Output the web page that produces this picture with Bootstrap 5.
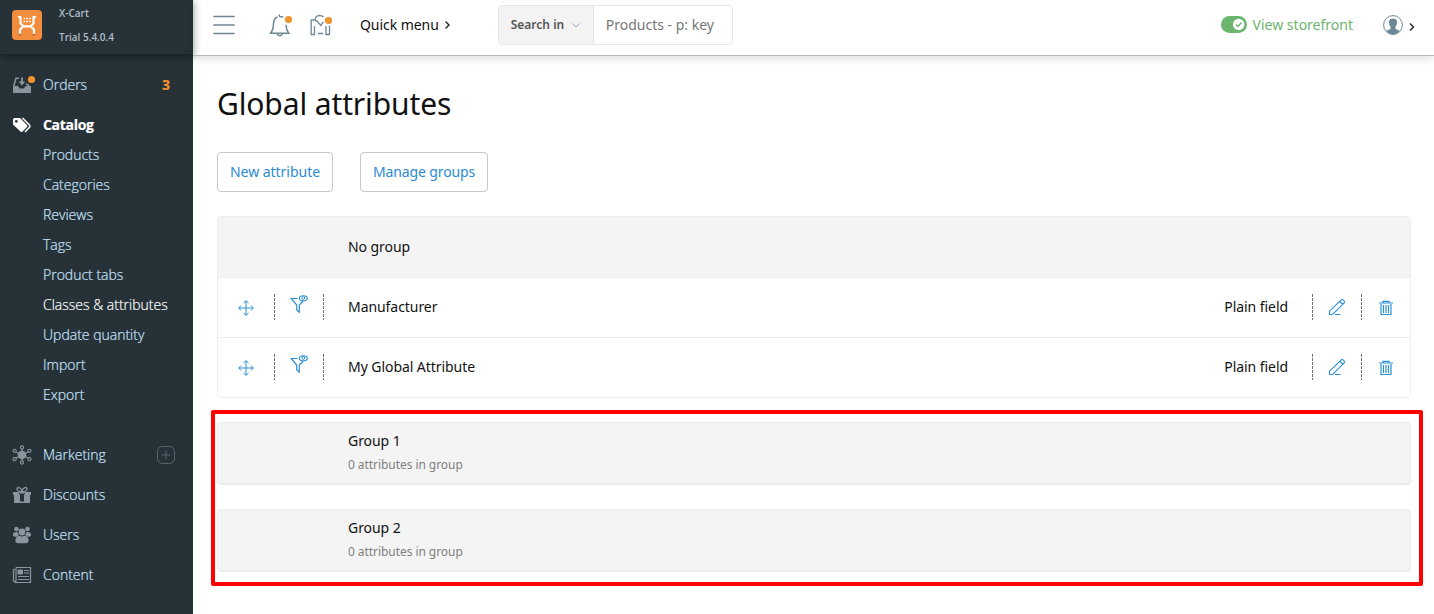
<!DOCTYPE html>
<html lang="en">
<head>
<meta charset="utf-8">
<title>Global attributes</title>
<meta name="viewport" content="width=device-width, initial-scale=1">
<link href="https://cdn.jsdelivr.net/npm/bootstrap@5.3.0/dist/css/bootstrap.min.css" rel="stylesheet">
<style>
body{font-family:"Noto Sans","Open Sans",sans-serif;font-size:14px;line-height:20px;letter-spacing:-.06px;color:#111;background:#fff;height:614px;overflow:hidden}
svg{display:block;flex:none}
a{text-decoration:none}
.side{width:193px;height:614px;background:#263238;font-family:"Open Sans",sans-serif;font-weight:300;letter-spacing:0}
.brand-bar{height:55px;padding-left:12px;box-shadow:0 1px 8px rgba(0,0,0,.45);border-bottom:1px solid #1c2226}
.brand-text{font-size:10px;font-weight:600;line-height:24px;color:#b4bfc9;margin:1px 0 0 17px}
.brand-logo{margin-top:10px}
.side-nav{padding-top:10px}
.side-link{height:40px;padding:0 23px 0 12px;color:#c9e3fb;display:flex;align-items:center}
.side-link,.sub-link{-webkit-text-stroke:.2px currentColor}
.side-link svg{width:20px;height:20px;margin-right:11px;color:#8c959d;overflow:visible}
.side-link.now{height:30px;margin-top:5px;color:#fff;font-weight:700;letter-spacing:-.3px}
.side-link.now svg{color:#fff}
.side-link.lower{margin-top:25px}
.side-link .plus{margin:0 -6px 0 auto;color:#58656c}
.sub-link{display:block;height:30px;line-height:30px;padding-left:43px;color:#c9e3fb}
.sub-link.now{color:#fff}
.count{margin-left:auto;color:#f0932f;font-weight:700}
.top{height:56px;border-bottom:1px solid #b9b9b9;box-shadow:0 2px 9px rgba(0,0,0,.14);padding:0 18px 6px 20px}
.bell{margin-left:34px}
.news{margin-left:17px}
.quick{margin-left:26px}
.search{height:40px;width:235px;border:1px solid #e6e6e6;border-radius:4px;overflow:hidden;margin-left:47px;letter-spacing:0}
.search-in{width:95px;background:#f3f3f3;border-right:1px solid #e6e6e6;color:#555;font-size:12px;font-weight:600;padding-left:12px}
.search-key{color:#777;padding-left:12px}
.green{color:#6bb56e;letter-spacing:0}
.storefront{margin-left:6px}
.user{margin-left:30px;margin-right:5px}
.page{padding:33px 11px 0 18px}
h1.title{font-size:30px;font-weight:400;line-height:30px;letter-spacing:-.12px;margin:0 0 33px 6px}
.actions{gap:27px;margin-left:6px}
.act{height:40px;border:1px solid #c8c8c8;border-radius:4px;color:#2b8bd2;font-size:14px;line-height:38px;letter-spacing:-.12px;padding:0;text-align:center}
.act:hover{border-color:#999;color:#1c6eac}
.w-new{width:116px;letter-spacing:-.03px}.w-man{width:128px}
.box{border:1px solid #eee;border-radius:4px;margin:24px 12px 12px 6px;height:182px}
.box-head{height:60px;background:#f4f4f4;padding-left:130px}
.attr-row{height:60px;border-top:1px solid #ececec;color:#2b8fd6;padding-bottom:1px}
.cell{width:48px;height:58px;display:flex;align-items:center;justify-content:center}
.cell.first{width:56px}
.cell svg{margin-top:2px}
.cell .pencil-icon{margin-top:0}
.cell .filter-icon{margin:0 0 7px}
.dash{width:1px;height:26px;flex:none;background:repeating-linear-gradient(#707070 0 3px,transparent 3px 4px)}
.attr-name{color:#111;margin-left:24px}
.attr-type{color:#111;margin:0 24px 0 auto}
.marked{border:4px solid red;border-radius:2px;padding:8px 8px 10px 2px;gap:24px}
.group-box{height:63px;border:1px solid #ececec;border-bottom-width:2px;border-radius:4px;background:#f4f4f4;padding:8px 0 0 130px}
.group-sub{font-size:12px;color:#808080;line-height:20px;margin-top:4px}
</style>
</head>
<body>
<svg width="0" height="0" class="position-absolute">
 <symbol id="move" viewBox="0 0 16 16"><path d="M8 1v14M1 8h14M5.500 3 8 .7 10.500 3M5.500 13 8 15.300 10.500 13M3 5.500.7 8 3 10.500M13 5.500 15.300 8 13 10.500" fill="none" stroke="currentColor"/></symbol>
 <symbol id="filter" viewBox="0 0 18 18"><path d="M7.500 3.500H1.200L6.700 10v4.800l2.600 2.500V10L13 6.500" fill="none" stroke="currentColor" stroke-width="1.200"/><ellipse cx="13.300" cy="3.300" rx="4" ry="2.600" fill="none" stroke="currentColor" stroke-width="1.100"/><circle cx="13.300" cy="3" r="1.400" fill="none" stroke="currentColor"/></symbol>
 <symbol id="pencil" viewBox="0 0 16 16"><path d="M.5 15.500V12.200L10.800 2.300l3 3L3.800 15.200zM10.800 2.300 12.300.8q1-.7 2.300.5t.7 2.300L13.800 5.300M6 15.500h5.500" fill="none" stroke="currentColor" stroke-width="1.100"/></symbol>
 <symbol id="trash" viewBox="0 0 14 16"><path d="M0 3h14M4 2.800V1.300h6v1.500M2 4v10.500h10V4" fill="none" stroke="currentColor" stroke-width="1.200"/><path d="M4.500 5v8M7 5v8M9.500 5v8" stroke="currentColor" stroke-width="1.200"/></symbol>
</svg>
<div class="d-flex">
 <aside class="side flex-shrink-0">
  <div class="brand-bar d-flex align-items-start">
   <svg class="brand-logo" width="30" height="30" viewBox="0 0 30 30"><rect width="30" height="30" rx="4" fill="#f28d3d"/><circle cx="8" cy="24.500" r="1.300" fill="#c46035"/><circle cx="22" cy="24.500" r="1.300" fill="#c46035"/><path d="M6 7h2.500v6.500l3 2.800h7l3-2.800V7H24M11.500 16.300 8 19.500v4.300M18.500 16.300 22 19.500v4.300" fill="none" stroke="#fff" stroke-width="2.200" stroke-linejoin="round"/><path d="M11.500 8.500h7M11.500 11.500h7" stroke="#fff" stroke-width="1.600" stroke-dasharray="1.600 1.100"/></svg>
   <div class="brand-text">X-Cart<br>Trial 5.4.0.4</div>
  </div>
  <nav class="side-nav">
   <a class="side-link" href="#"><svg viewBox="0 0 20 20"><path d="M1 11h5l1.500 2.500h4.500l1.500-2.500H19V18H1z" fill="currentColor"/><path d="M1.800 11 4 3.200h3M14 9l1.800.5 1.200 2" fill="none" stroke="currentColor" stroke-width="1.500"/><path d="M10 2.500v6" stroke="currentColor" stroke-width="1.800"/><path d="M6.700 6.500h6.600L10 10.500z" fill="currentColor"/><circle cx="19.500" cy="4.500" r="3.600" fill="#f0932f"/></svg><span>Orders</span><span class="count">3</span></a>
   <a class="side-link now" href="#"><svg viewBox="0 0 20 20"><path d="M1 4.500Q1 3 2.500 3H8l7 7q1 1 0 2l-4.500 4.500q-1 1-2 0L1 9.500z" fill="currentColor"/><circle cx="4.300" cy="6.300" r="1.400" fill="#263238"/><path d="M10.500 3l7 7q1 1.200 0 2.200L13 17" fill="none" stroke="currentColor" stroke-width="1.500"/></svg>Catalog</a>
   <a class="sub-link" href="#">Products</a>
   <a class="sub-link" href="#">Categories</a>
   <a class="sub-link" href="#">Reviews</a>
   <a class="sub-link" href="#">Tags</a>
   <a class="sub-link" href="#">Product tabs</a>
   <a class="sub-link now" href="#">Classes &amp; attributes</a>
   <a class="sub-link" href="#">Update quantity</a>
   <a class="sub-link" href="#">Import</a>
   <a class="sub-link" href="#">Export</a>
   <a class="side-link lower" href="#"><svg viewBox="0 0 20 20"><circle cx="10" cy="10" r="4.300" fill="currentColor"/><g fill="none" stroke="currentColor" stroke-width="1.100"><path d="M10 4v12M4 7l12 6M4 13l12-6"/><circle cx="10" cy="2.500" r="1.600"/><circle cx="10" cy="17.500" r="1.600"/><circle cx="2.600" cy="5.800" r="1.600"/><circle cx="17.400" cy="5.800" r="1.600"/><circle cx="2.600" cy="14.200" r="1.600"/><circle cx="17.400" cy="14.200" r="1.600"/></g></svg>Marketing<svg class="plus" viewBox="0 0 20 20"><rect x="1.500" y="1.500" width="17" height="17" rx="5" fill="none" stroke="currentColor"/><path d="M10 5.500v9M5.500 10h9" stroke="currentColor"/></svg></a>
   <a class="side-link" href="#"><svg viewBox="0 0 20 20"><path d="M1 7h6.500v3H1zM12.500 7H19v3h-6.500zM2 10h6v8H2zM12 10h6v8h-6zM8 7h4v1.500H8zM8 16.500h4V18H8z" fill="currentColor"/><path d="M10 6.500C7 7 4.500 5.500 5 3.500s4.500-1 5 3c.5-4 4.500-5 5-3s-2 3.500-5 3z" fill="none" stroke="currentColor" stroke-width="1.300"/></svg>Discounts</a>
   <a class="side-link" href="#"><svg viewBox="0 0 20 20" fill="currentColor"><circle cx="4.500" cy="4" r="2.300"/><circle cx="15.500" cy="4" r="2.300"/><circle cx="10" cy="7" r="3.400"/><path d="M1 11V8.500Q2 6.500 5.500 7q.3 2 1.500 3l-3 2zM19 11V8.500q-1-2-4.500-1.500-.3 2-1.500 3l3 2zM3.500 17v-3q1-3 4-3.200 2.500 1.200 5 0 3 .2 4 3.200v3l-2 1.200h-9z"/></svg>Users</a>
   <a class="side-link" href="#"><svg viewBox="0 0 20 20" fill="none" stroke="currentColor"><path d="M4 2.500h14.500v15H3.500L1.500 16V4.500H3M4 2.500v13.500l-1 1M12 5.500h5M12 8h5M6 11.500h11M6 14.500h11" stroke-width="1.200"/><path d="M6 5h4.500v4H6z" fill="currentColor"/></svg>Content</a>
  </nav>
 </aside>
 <div class="flex-grow-1">
  <header class="top d-flex align-items-center">
   <svg width="22" height="20" viewBox="0 0 22 20" stroke="#6d8796" stroke-width="1.700" stroke-linecap="round"><path d="M1 1.500h20M1 10h20M1 18.500h20"/></svg>
   <svg class="bell" width="24" height="24" viewBox="0 0 24 24" fill="none" stroke="#6d8796" stroke-width="1.500"><path d="M8.500 4C5.500 5 4.500 7.500 4.500 11c0 6-.8 6-3 9.300h18.200c-1.800-2.500-2.600-4-2.700-8.300M10 1.500l.8 2 3.500.5M8.300 20.500c.5 3 4.500 3 5 0"/><circle cx="19.500" cy="6.500" r="3.600" fill="#f0932f" stroke="none"/></svg>
   <svg class="news" width="24" height="24" viewBox="0 0 24 24" fill="none" stroke="#6d8796" stroke-width="1.300"><path d="M4.500 7H1.200v14.500h3.300V13M5.800 8.500C4 4.500 7 2.500 9.500 2.500c1.800 0 3 .5 4 1.500M6.500 7.500l4.300 5 2.500-3.500M8 20.500h5M16 13v8.500h3.500V12.500"/><circle cx="18.500" cy="7.500" r="3.600" fill="#f0932f" stroke="none"/></svg>
   <span class="quick">Quick menu</span>
   <svg class="ms-1" width="8" height="10" viewBox="0 0 8 10" fill="none" stroke="#222" stroke-width="1.400"><path d="m2.500 1.500 3.500 3.500-3.500 3.500"/></svg>
   <div class="search d-flex">
    <div class="search-in d-flex align-items-center">Search in<svg class="ms-2" width="8" height="6" viewBox="0 0 8 6" fill="none" stroke="#9aa9bb"><path d="m.5 1.500 3.500 3.500 3.500-3.500"/></svg></div>
    <div class="search-key d-flex align-items-center">Products - p: key</div>
   </div>
   <a class="green d-flex align-items-center ms-auto" href="#"><svg width="26" height="17" viewBox="0 0 26 17"><rect width="26" height="17" rx="8.500" fill="#6bb56e"/><circle cx="17.700" cy="8.500" r="5.700" fill="#fff"/><path d="m15 8.500 2 2 3.500-4" fill="none" stroke="#6bb56e" stroke-width="1.200"/></svg><span class="storefront">View storefront</span></a>
   <svg class="user" width="20" height="20" viewBox="0 0 20 20"><circle cx="10" cy="10" r="9.400" fill="#fff" stroke="#6d8796"/><path d="M6 6.500C6 2.500 14 2.500 14 6.500c0 3-.5 4-1.500 5v2.500l4 1.500Q14 19.500 10 19.500t-6.500-4l4-1.500v-2.500C6.500 10.500 6 9.500 6 6.500z" fill="#6d8796"/></svg>
   <svg class="mt-1" width="8" height="10" viewBox="0 0 8 10" fill="none" stroke="#222" stroke-width="1.400"><path d="m2 1.500 3.500 3.500L2 8.500"/></svg>
  </header>
  <main class="page">
   <h1 class="title">Global attributes</h1>
   <div class="actions d-flex"><a class="btn act w-new" href="#">New attribute</a><a class="btn act w-man" href="#">Manage groups</a></div>
   <section class="box">
    <div class="box-head d-flex align-items-center">No group</div>
    <div class="attr-row d-flex align-items-center">
     <div class="cell first"><svg width="16" height="16"><use href="#move"/></svg></div><i class="dash"></i>
     <div class="cell"><svg class="filter-icon" width="18" height="18"><use href="#filter"/></svg></div><i class="dash"></i>
     <span class="attr-name">Manufacturer</span><span class="attr-type">Plain field</span><i class="dash"></i>
     <div class="cell"><svg class="pencil-icon" width="16" height="16"><use href="#pencil"/></svg></div><i class="dash"></i>
     <div class="cell"><svg width="14" height="16"><use href="#trash"/></svg></div>
    </div>
    <div class="attr-row d-flex align-items-center">
     <div class="cell first"><svg width="16" height="16"><use href="#move"/></svg></div><i class="dash"></i>
     <div class="cell"><svg class="filter-icon" width="18" height="18"><use href="#filter"/></svg></div><i class="dash"></i>
     <span class="attr-name">My Global Attribute</span><span class="attr-type">Plain field</span><i class="dash"></i>
     <div class="cell"><svg class="pencil-icon" width="16" height="16"><use href="#pencil"/></svg></div><i class="dash"></i>
     <div class="cell"><svg width="14" height="16"><use href="#trash"/></svg></div>
    </div>
   </section>
   <section class="marked d-flex flex-column">
    <div class="group-box"><div>Group 1</div><div class="group-sub">0 attributes in group</div></div>
    <div class="group-box"><div>Group 2</div><div class="group-sub">0 attributes in group</div></div>
   </section>
  </main>
 </div>
</div>
<script src="https://cdn.jsdelivr.net/npm/bootstrap@5.3.0/dist/js/bootstrap.bundle.min.js"></script>
</body>
</html>
